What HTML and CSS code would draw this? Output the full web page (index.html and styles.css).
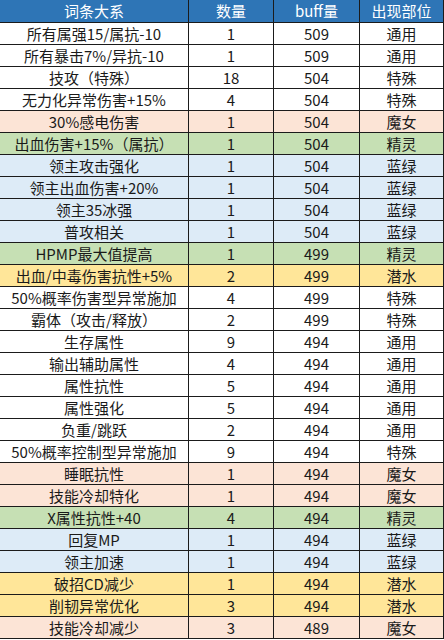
FILE: index.html
```html
<!DOCTYPE html>
<html lang="zh-CN">
<head>
<meta charset="utf-8">
<title>词条大系</title>
<link rel="stylesheet" href="styles.css">
</head>
<body>
<table class="sheet">
  <colgroup>
    <col class="c-name"><col class="c-count"><col class="c-buff"><col class="c-where">
  </colgroup>
  <thead>
    <tr class="head"><th>词条大系</th><th>数量</th><th>buff量</th><th>出现部位</th></tr>
  </thead>
  <tbody>
    <tr><td>所有属强15/属抗-10</td><td>1</td><td>509</td><td>通用</td></tr>
    <tr><td>所有暴击7%/异抗-10</td><td>1</td><td>509</td><td>通用</td></tr>
    <tr><td>技攻（特殊）</td><td>18</td><td>504</td><td>特殊</td></tr>
    <tr><td>无力化异常伤害+15%</td><td>4</td><td>504</td><td>特殊</td></tr>
    <tr class="witch"><td>30%感电伤害</td><td>1</td><td>504</td><td>魔女</td></tr>
    <tr class="elf"><td>出血伤害+15%（属抗）</td><td>1</td><td>504</td><td>精灵</td></tr>
    <tr class="teal"><td>领主攻击强化</td><td>1</td><td>504</td><td>蓝绿</td></tr>
    <tr class="teal"><td>领主出血伤害+20%</td><td>1</td><td>504</td><td>蓝绿</td></tr>
    <tr class="teal"><td>领主35冰强</td><td>1</td><td>504</td><td>蓝绿</td></tr>
    <tr class="teal"><td>普攻相关</td><td>1</td><td>504</td><td>蓝绿</td></tr>
    <tr class="elf"><td>HPMP最大值提高</td><td>1</td><td>499</td><td>精灵</td></tr>
    <tr class="dive"><td>出血/中毒伤害抗性+5%</td><td>2</td><td>499</td><td>潜水</td></tr>
    <tr><td>50%概率伤害型异常施加</td><td>4</td><td>499</td><td>特殊</td></tr>
    <tr><td>霸体（攻击/释放）</td><td>2</td><td>499</td><td>特殊</td></tr>
    <tr><td>生存属性</td><td>9</td><td>494</td><td>通用</td></tr>
    <tr><td>输出辅助属性</td><td>4</td><td>494</td><td>通用</td></tr>
    <tr><td>属性抗性</td><td>5</td><td>494</td><td>通用</td></tr>
    <tr><td>属性强化</td><td>5</td><td>494</td><td>通用</td></tr>
    <tr><td>负重/跳跃</td><td>2</td><td>494</td><td>通用</td></tr>
    <tr><td>50%概率控制型异常施加</td><td>9</td><td>494</td><td>特殊</td></tr>
    <tr class="witch"><td>睡眠抗性</td><td>1</td><td>494</td><td>魔女</td></tr>
    <tr class="witch"><td>技能冷却特化</td><td>1</td><td>494</td><td>魔女</td></tr>
    <tr class="elf"><td>X属性抗性+40</td><td>4</td><td>494</td><td>精灵</td></tr>
    <tr class="teal"><td>回复MP</td><td>1</td><td>494</td><td>蓝绿</td></tr>
    <tr class="teal"><td>领主加速</td><td>1</td><td>494</td><td>蓝绿</td></tr>
    <tr class="dive"><td>破招CD减少</td><td>1</td><td>494</td><td>潜水</td></tr>
    <tr class="dive"><td>削韧异常优化</td><td>3</td><td>494</td><td>潜水</td></tr>
    <tr class="witch"><td>技能冷却减少</td><td>3</td><td>489</td><td>魔女</td></tr>
  </tbody>
</table>
</body>
</html>
```
FILE: styles.css
```css
html, body {
  margin: 0;
  padding: 0;
  background: #ffffff;
}

.sheet {
  width: 444px;
  table-layout: fixed;
  border-collapse: separate;
  border-spacing: 0;
  font-family: "Noto Sans CJK SC", "Noto Sans", sans-serif;
  font-size: 15px;
  color: #1a1a1a;
}

.c-name { width: 189px; }
.c-count { width: 85px; }
.c-buff { width: 86px; }
.c-where { width: 84px; }

.sheet th,
.sheet td {
  padding: 0;
  text-align: center;
  white-space: nowrap;
  overflow: hidden;
  border-right: 1px solid #1b1b1b;
  border-bottom: 1px solid #1b1b1b;
  line-height: 21px;
  height: 21px;
}

.sheet tr {
  height: 22px;
}

.head th {
  background: #2e75b6;
  color: #ffffff;
  font-weight: normal;
  font-size: 15px;
  height: 22px;
  line-height: 22px;
}

.witch td { background: #fce4d6; }
.elf td { background: #c6e0b4; }
.teal td { background: #ddebf7; }
.dive td { background: #ffe699; }
```
